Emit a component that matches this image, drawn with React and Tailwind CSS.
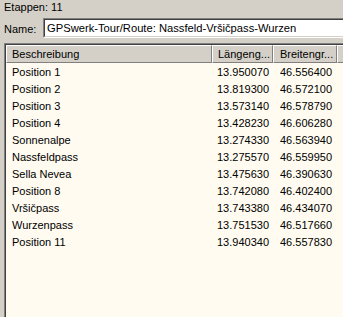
const rows = [
  { name: "Position 1", lon: "13.950070", lat: "46.556400" },
  { name: "Position 2", lon: "13.819300", lat: "46.572100" },
  { name: "Position 3", lon: "13.573140", lat: "46.578790" },
  { name: "Position 4", lon: "13.428230", lat: "46.606280" },
  { name: "Sonnenalpe", lon: "13.274330", lat: "46.563940" },
  { name: "Nassfeldpass", lon: "13.275570", lat: "46.559950" },
  { name: "Sella Nevea", lon: "13.475630", lat: "46.390630" },
  { name: "Position 8", lon: "13.742080", lat: "46.402400" },
  { name: "Vršičpass", lon: "13.743380", lat: "46.434070" },
  { name: "Wurzenpass", lon: "13.751530", lat: "46.517660" },
  { name: "Position 11", lon: "13.940340", lat: "46.557830" },
];

const headCell =
  "h-[18px] flex items-center border-t border-l border-t-white border-l-white border-b border-r border-b-[#808080] border-r-[#808080] shrink-0";

const App = () => {
  return (
    <div className="w-[343px] h-[317px] overflow-hidden bg-[#d4d0c8] text-[11px] leading-[13px] text-black font-['Liberation_Sans',Arial,sans-serif]">
      <div className="h-[18px] pt-[1px] pl-[4px]">Etappen: 11</div>

      <div className="flex items-center h-[20px]">
        <div className="w-[43px] shrink-0 pl-[4px] pt-[3px]">Name:</div>
        <div className="w-[320px] h-[20px] shrink-0 border border-t-[#808080] border-l-[#808080] border-b-white border-r-white">
          <div className="h-full border border-t-[#404040] border-l-[#404040] border-b-[#d4d0c8] border-r-[#d4d0c8] bg-white flex items-center pl-[2px] pt-[1px] text-[11.2px]">
            GPSwerk-Tour/Route: Nassfeld-Vršičpass-Wurzen
          </div>
        </div>
      </div>

      <div className="ml-[4px] mt-[5px] w-[360px] h-[300px] border-t border-l border-[#808080]">
        <div className="h-full border-t border-l border-[#404040] bg-[#fffbf0]">
          <div className="flex bg-[#d4d0c8]">
            <div className={headCell + " w-[206px] pl-[5px]"}>Beschreibung</div>
            <div className={headCell + " w-[61px] pl-[5px]"}>Längeng...</div>
            <div className={headCell + " w-[64px] pl-[6px]"}>Breitengr...</div>
            <div className={headCell + " flex-1"}></div>
          </div>
          <div className="flex flex-col pt-[1px]">
            {rows.map((r) => (
              <div key={r.name} className="flex h-[17px] items-center">
                <div className="w-[206px] pl-[6px] shrink-0">{r.name}</div>
                <div className="w-[61px] pr-[4px] text-right shrink-0">{r.lon}</div>
                <div className="w-[64px] pr-[5px] text-right shrink-0">{r.lat}</div>
              </div>
            ))}
          </div>
        </div>
      </div>
    </div>
  );
};

export default App;
